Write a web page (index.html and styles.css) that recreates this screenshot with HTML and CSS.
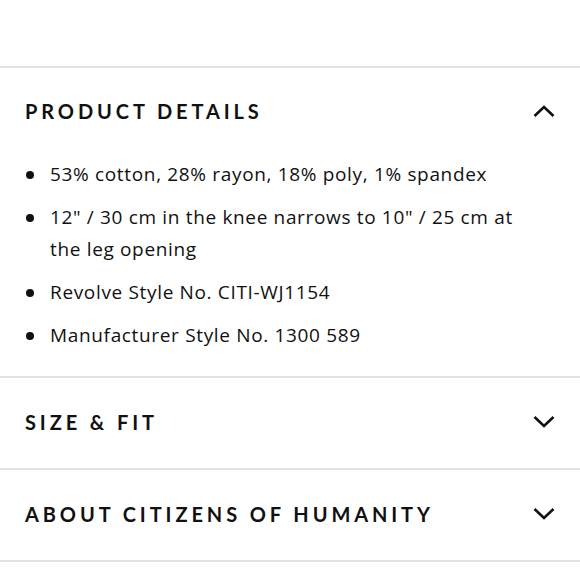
FILE: index.html
```html
<!DOCTYPE html>
<html lang="en">
<head>
<meta charset="utf-8">
<title>Product details</title>
<link rel="stylesheet" href="styles.css">
</head>
<body>
<div class="accordion">
  <section class="acc open">
    <div class="acc-head">
      <h2 class="acc-title">PRODUCT DETAILS</h2>
      <svg class="chev" viewBox="0 0 22 12" width="22" height="12"><path d="M1.5 11 L11 2 L20.5 11" fill="none" stroke="#111" stroke-width="2.6"/></svg>
    </div>
    <ul class="details">
      <li>53% cotton, 28% rayon, 18% poly, 1% spandex</li>
      <li>12" / 30 cm in the knee narrows to 10" / 25 cm at the leg opening</li>
      <li>Revolve Style No. CITI-WJ1154</li>
      <li>Manufacturer Style No. 1300 589</li>
    </ul>
  </section>
  <section class="acc">
    <div class="acc-head closed">
      <h2 class="acc-title">SIZE &amp; FIT</h2>
      <svg class="chev" viewBox="0 0 22 12" width="22" height="12"><path d="M1.5 1 L11 10 L20.5 1" fill="none" stroke="#111" stroke-width="2.6"/></svg>
    </div>
  </section>
  <section class="acc">
    <div class="acc-head closed">
      <h2 class="acc-title">ABOUT CITIZENS OF HUMANITY</h2>
      <svg class="chev" viewBox="0 0 22 12" width="22" height="12"><path d="M1.5 1 L11 10 L20.5 1" fill="none" stroke="#111" stroke-width="2.6"/></svg>
    </div>
  </section>
</div>
</body>
</html>
```
FILE: styles.css
```css
html, body {
  margin: 0;
  padding: 0;
  background: #fff;
}
body {
  font-family: "Open Sans", "Liberation Sans", sans-serif;
  color: #111;
}
.accordion {
  padding-top: 66px;
}
.acc {
  border-top: 2px solid #e3e3e3;
}
.acc:last-child {
  border-bottom: 2px solid #e3e3e3;
}
.acc-head {
  display: flex;
  align-items: center;
  justify-content: space-between;
  height: 86px;
  padding: 0 25px;
}
.acc-head.closed {
  height: 88px;
  padding-bottom: 2px;
}
.acc-title {
  margin: 0;
  font-family: "Lato", "Liberation Sans", sans-serif;
  font-weight: 700;
  font-size: 20px;
  letter-spacing: 3.9px;
  color: #111;
}
.chev {
  display: block;
}
.details {
  list-style: none;
  margin: 4px 0 0;
  padding: 0 50px 25px 50px;
  font-size: 19px;
  letter-spacing: 0.66px;
  line-height: 32px;
}
.details li {
  position: relative;
  margin-bottom: 11px;
}
.details li:last-child {
  margin-bottom: 0;
}
.details li::before {
  content: "";
  position: absolute;
  left: -24px;
  top: 13px;
  width: 8px;
  height: 8px;
  border-radius: 50%;
  background: #111;
}
```
